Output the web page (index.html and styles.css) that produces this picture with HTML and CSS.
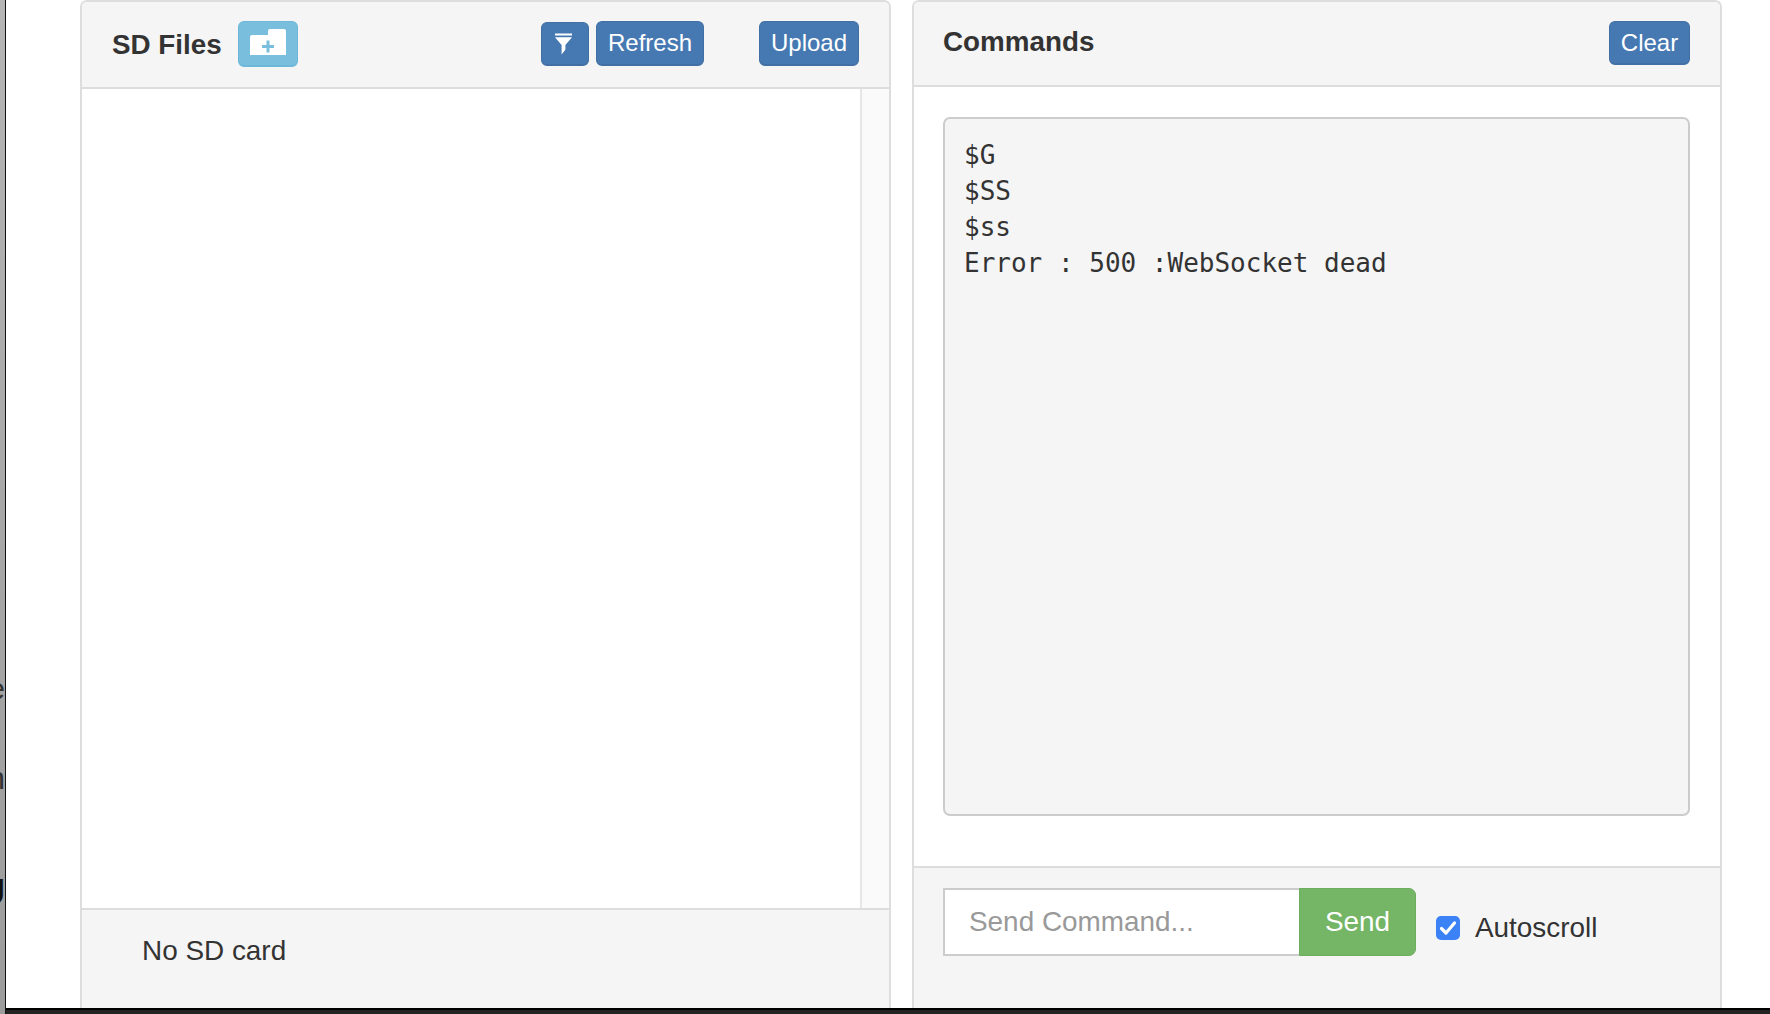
FILE: index.html
```html
<!DOCTYPE html>
<html lang="en">
<head>
<meta charset="utf-8">
<title>Files and Commands</title>
<link rel="stylesheet" href="styles.css">
</head>
<body>
<div class="backdrop"><span class="peek peek-e">e</span><span class="peek peek-h">h</span><span class="peek peek-u">U</span></div>
<div class="window">
  <main class="content">
    <section class="panel">
      <header class="panel-head files-head">
        <h2 class="title">SD Files</h2>
        <button class="btn btn-info" type="button" aria-label="New folder">
          <svg class="icon-folder" viewBox="0 0 36 26"><path d="M0 8a2 2 0 0 1 2-2h16V2a2 2 0 0 1 2-2h14a2 2 0 0 1 2 2v24H0z" fill="#fff"/><path d="M16.500 11.500h3v4.500h4.500v3h-4.500v4.500h-3v-4.500h-4.500v-3h4.500z" fill="#79bedd"/></svg>
        </button>
        <div class="actions">
          <button class="btn btn-primary btn-filter" type="button" aria-label="Filter">
            <svg class="icon-filter" viewBox="0 0 20 22"><path d="M1 0h18v2H1zM1 4h18l-7 8v5l-4 5V12z" fill="#fff"/></svg>
          </button>
          <button class="btn btn-primary btn-refresh" type="button">Refresh</button>
          <button class="btn btn-primary btn-upload" type="button">Upload</button>
        </div>
      </header>
      <div class="files-body">
        <div class="file-list"></div>
        <div class="scroll-track"></div>
      </div>
      <footer class="panel-foot files-foot">No SD card</footer>
    </section>
    <section class="panel">
      <header class="panel-head commands-head">
        <h2 class="title">Commands</h2>
        <button class="btn btn-primary btn-clear" type="button">Clear</button>
      </header>
      <div class="commands-body">
        <pre class="console">$G
$SS
$ss
Error : 500 :WebSocket dead</pre>
      </div>
      <footer class="panel-foot commands-foot">
        <div class="input-group">
          <input class="command-input" type="text" placeholder="Send Command...">
          <button class="btn-send" type="button">Send</button>
        </div>
        <label class="autoscroll">
          <span class="check"><svg viewBox="0 0 24 24"><path d="M5.500 12.500l4.500 4.500 8.500-10" fill="none" stroke="#fff" stroke-width="3.200" stroke-linecap="round" stroke-linejoin="round"/></svg></span>
          Autoscroll
        </label>
      </footer>
    </section>
  </main>
  <div class="bottom-bar"></div>
</div>
</body>
</html>
```
FILE: styles.css
```css
* { box-sizing: border-box; }
html, body { margin: 0; height: 100%; }
body {
  display: flex;
  width: 1770px;
  height: 1014px;
  overflow: hidden;
  background: #fff;
  color: #333;
  font-family: "Liberation Sans", Arial, sans-serif;
  font-size: 27.9px;
}
.backdrop {
  position: relative;
  flex: 0 0 5px;
  overflow: hidden;
  background: linear-gradient(#b5b5b5 0, #a8a8a8 50%, #9c9c9c 100%);
}
.peek {
  position: absolute;
  right: 0;
  line-height: 1;
  color: #333;
}
.peek-e { top: 674px; font-size: 30px; }
.peek-h { top: 762px; font-size: 32px; }
.peek-u { top: 875px; font-size: 36px; font-weight: 700; color: #111; }
.window {
  flex: 1;
  display: flex;
  flex-direction: column;
  min-width: 0;
  border-left: 1px solid #111;
}
.content {
  flex: 1;
  min-height: 0;
  display: flex;
  gap: 21px;
  padding-left: 74px;
  overflow: hidden;
}
.bottom-bar {
  flex: 0 0 6px;
  background: #222;
  border-top: 2px solid #000;
}
.panel {
  display: flex;
  flex-direction: column;
  border: 2px solid #ddd;
  border-bottom: 0;
  border-radius: 7px 7px 0 0;
  overflow: hidden;
}
.panel:first-child { flex: 0 0 811px; }
.panel:last-child { flex: 0 0 810px; }
.panel-head {
  display: flex;
  background: #f5f5f5;
  border-bottom: 2px solid #ddd;
  padding-right: 29px;
  padding-left: 29px;
}
.files-head { height: 87px; padding-left: 30px; padding-right: 30px; padding-top: 19px; align-items: flex-start; }
.commands-head { height: 85px; padding-top: 19px; padding-right: 30px; justify-content: space-between; align-items: flex-start; }
.title { margin: 0; font-size: 27.8px; font-weight: 700; color: #333; }
.files-head .title { line-height: 48px; }
.commands-head .title { line-height: 42px; }
.btn {
  display: flex;
  align-items: center;
  justify-content: center;
  height: 45px;
  padding: 0;
  border: 1px solid #41709f;
  border-bottom-width: 2px;
  border-radius: 6px;
  font: 24px "Liberation Sans", Arial, sans-serif;
  color: #fff;
}
.btn-primary { background: #4679b2; border-color: #4270a4; }
.btn-info { width: 60px; height: 46px; margin-left: 16px; padding-bottom: 4px; background: #79bedd; border-color: #6db7d8; }
.actions { display: flex; align-items: flex-start; margin-left: auto; }
.btn-filter { width: 48px; height: 44px; margin-top: 1px; margin-right: 7px; padding-right: 4px; }
.btn-refresh { width: 108px; margin-right: 55px; }
.btn-upload { width: 100px; }
.btn-clear { width: 81px; height: 44px; }
.icon-folder { width: 36px; height: 26px; }
.icon-filter { width: 19px; height: 22px; }
.files-body { flex: 1; min-height: 0; display: flex; }
.file-list { flex: 1; background: #fff; }
.scroll-track { flex: 0 0 29px; background: #fafafa; border-left: 2px solid #e6e6e6; }
.panel-foot { background: #f5f5f5; border-top: 2px solid #ddd; }
.files-foot { flex: 0 0 100px; padding: 23px 0 0 60px; line-height: 36px; }
.commands-body { flex: 1; min-height: 0; padding: 30px 30px 0 29px; background: #fff; }
.console {
  margin: 0;
  height: 699px;
  padding: 18px 19px;
  background: #f5f5f5;
  border: 2px solid #ccc;
  border-radius: 7px;
  font-family: "DejaVu Sans Mono", "Liberation Mono", monospace;
  font-size: 26px;
  line-height: 36px;
  color: #333;
}
.commands-foot { flex: 0 0 142px; display: flex; align-items: flex-start; padding: 20px 0 0 29px; }
.input-group { display: flex; height: 68px; }
.command-input {
  width: 356px;
  height: 68px;
  padding: 0 24px;
  border: 2px solid #ccc;
  border-right: 0;
  background: #fff;
  font: 27.9px "Liberation Sans", Arial, sans-serif;
  color: #333;
  outline: none;
}
.command-input::placeholder { color: #999; opacity: 1; }
.btn-send {
  width: 117px;
  height: 68px;
  padding: 0;
  border: 1px solid #6dad5e;
  border-radius: 0 7px 7px 0;
  background: #74b566;
  color: #fff;
  font: 27.9px "Liberation Sans", Arial, sans-serif;
}
.autoscroll { display: flex; align-items: center; gap: 15px; margin: 24px 0 0 20px; height: 32px; }
.check {
  display: block;
  width: 24px;
  height: 24px;
  border-radius: 5px;
  background: #3b82f6;
}
.check svg { display: block; width: 24px; height: 24px; }
```
